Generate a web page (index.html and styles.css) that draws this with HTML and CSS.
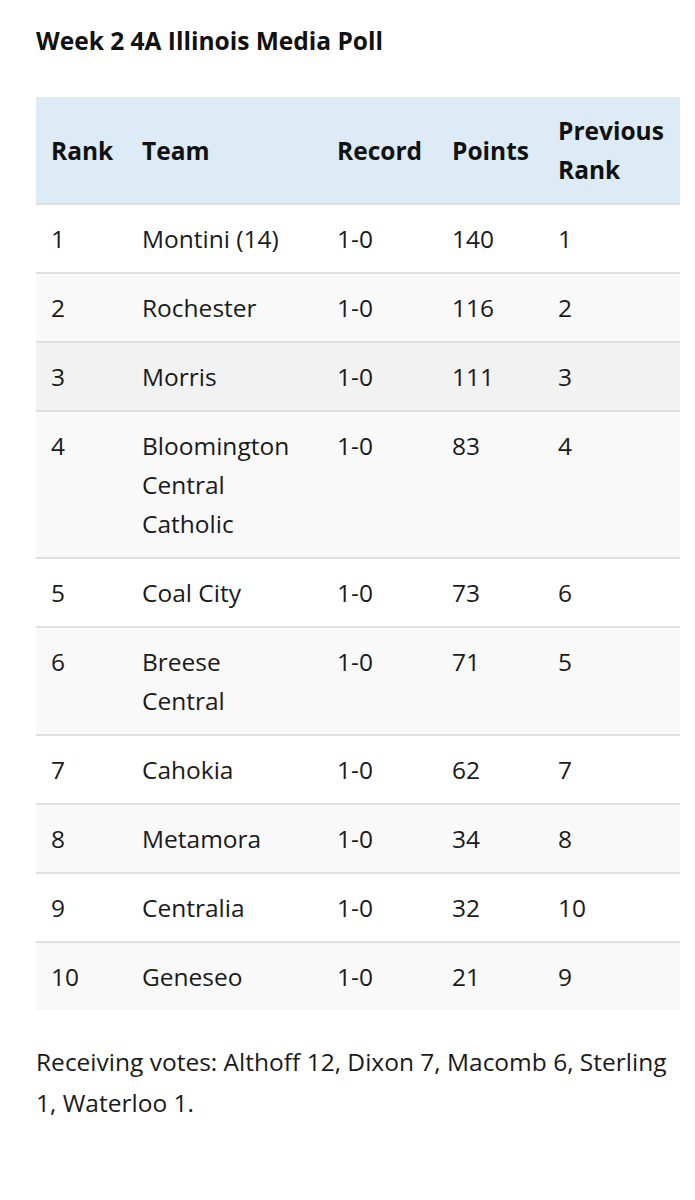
FILE: index.html
```html
<!DOCTYPE html>
<html lang="en">
<head>
<meta charset="utf-8">
<title>Week 2 4A Illinois Media Poll</title>
<link rel="stylesheet" href="styles.css">
</head>
<body>
<main class="article">
  <h2 class="title">Week 2 4A Illinois Media Poll</h2>
  <table class="poll">
    <colgroup>
      <col class="c-rank"><col class="c-team"><col class="c-rec"><col class="c-pts"><col class="c-prev">
    </colgroup>
    <thead>
      <tr><th>Rank</th><th>Team</th><th>Record</th><th>Points</th><th>Previous Rank</th></tr>
    </thead>
    <tbody>
      <tr><td>1</td><td>Montini (14)</td><td>1-0</td><td>140</td><td>1</td></tr>
      <tr><td>2</td><td>Rochester</td><td>1-0</td><td>116</td><td>2</td></tr>
      <tr class="hover"><td>3</td><td>Morris</td><td>1-0</td><td>111</td><td>3</td></tr>
      <tr><td>4</td><td>Bloomington Central Catholic</td><td>1-0</td><td>83</td><td>4</td></tr>
      <tr><td>5</td><td>Coal City</td><td>1-0</td><td>73</td><td>6</td></tr>
      <tr><td>6</td><td>Breese Central</td><td>1-0</td><td>71</td><td>5</td></tr>
      <tr><td>7</td><td>Cahokia</td><td>1-0</td><td>62</td><td>7</td></tr>
      <tr><td>8</td><td>Metamora</td><td>1-0</td><td>34</td><td>8</td></tr>
      <tr><td>9</td><td>Centralia</td><td>1-0</td><td>32</td><td>10</td></tr>
      <tr><td>10</td><td>Geneseo</td><td>1-0</td><td>21</td><td>9</td></tr>
    </tbody>
  </table>
  <p class="votes">Receiving votes: Althoff 12, Dixon 7, Macomb 6, Sterling 1, Waterloo 1.</p>
</main>
</body>
</html>
```
FILE: styles.css
```css
html, body {
  margin: 0;
  padding: 0;
  background: #ffffff;
}
body {
  font-family: "Open Sans", "Noto Sans", sans-serif;
  color: #1a1a1a;
}
.article {
  width: 644px;
  padding: 0 15px 0 36px;
}
.title {
  margin: 24px 0 0;
  font-size: 24.5px;
  line-height: 34px;
  font-weight: 700;
  color: #111;
}
.poll {
  margin-top: 39px;
  width: 644px;
  table-layout: fixed;
  border-collapse: collapse;
  font-size: 24.5px;
  line-height: 39px;
}
.c-rank { width: 91px; }
.c-team { width: 195px; }
.c-rec { width: 115px; }
.c-pts { width: 106px; }
.c-prev { width: 137px; }
.poll th, .poll td {
  text-align: left;
  vertical-align: top;
  padding: 14px 15px;
}
.poll th {
  vertical-align: middle;
  font-weight: 700;
  color: #111;
}
.poll thead tr {
  background: #dcebf5;
  border-bottom: 2px solid #dedede;
}
.poll tbody tr {
  border-bottom: 2px solid #e0e0e0;
}
.poll tbody tr:nth-child(even) {
  background: #f9f9f9;
}
.poll tbody tr:last-child {
  border-bottom: none;
}
.poll tbody tr.hover {
  background: #f2f2f2;
}
.votes {
  margin: 31px 0 0;
  font-size: 24.5px;
  line-height: 41px;
  color: #1a1a1a;
}
```
